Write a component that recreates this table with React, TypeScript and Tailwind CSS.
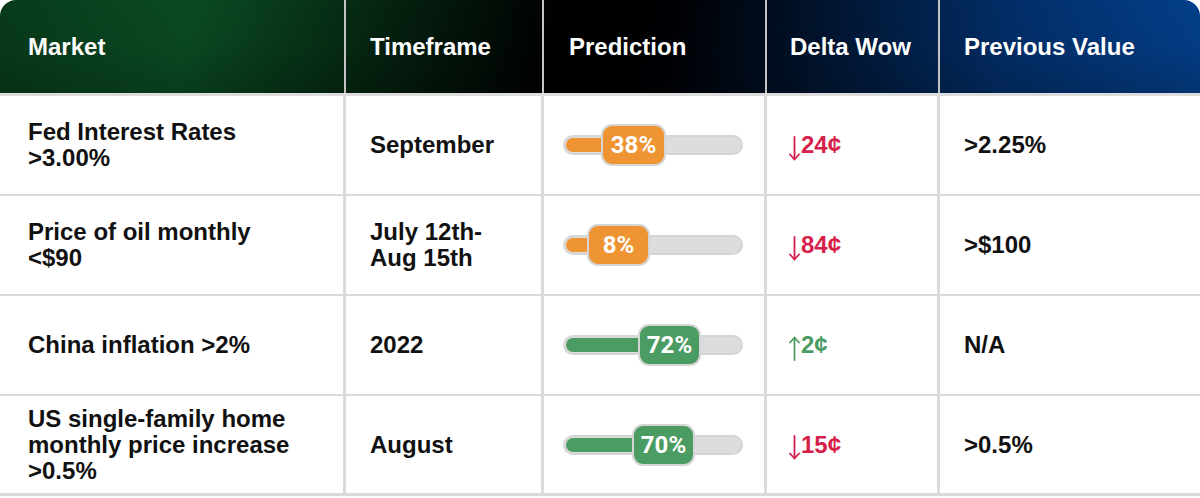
import React from 'react';

type Row = {
  market: string[];
  timeframe: string[];
  pct: number;
  badgeLeft: number;
  badgeWidth: number;
  color: 'orange' | 'green';
  delta: { dir: 'up' | 'down'; value: string };
  prev: string;
};

const rows: Row[] = [
  {
    market: ['Fed Interest Rates', '>3.00%'],
    timeframe: ['September'],
    pct: 38,
    badgeLeft: 38,
    badgeWidth: 65,
    color: 'orange',
    delta: { dir: 'down', value: '24¢' },
    prev: '>2.25%',
  },
  {
    market: ['Price of oil monthly', '<$90'],
    timeframe: ['July 12th-', 'Aug 15th'],
    pct: 8,
    badgeLeft: 24,
    badgeWidth: 63,
    color: 'orange',
    delta: { dir: 'down', value: '84¢' },
    prev: '>$100',
  },
  {
    market: ['China inflation >2%'],
    timeframe: ['2022'],
    pct: 72,
    badgeLeft: 75,
    badgeWidth: 63,
    color: 'green',
    delta: { dir: 'up', value: '2¢' },
    prev: 'N/A',
  },
  {
    market: ['US single-family home', 'monthly price increase', '>0.5%'],
    timeframe: ['August'],
    pct: 70,
    badgeLeft: 69,
    badgeWidth: 63,
    color: 'green',
    delta: { dir: 'down', value: '15¢' },
    prev: '>0.5%',
  },
];

const cols = 'grid grid-cols-[346px_198px_223px_173px_1fr]';

const PredictionBar = ({ row }: { row: Row }) => {
  const fill = row.color === 'orange' ? 'bg-[#ee9433]' : 'bg-[#4b9c63]';
  return (
    <div className="relative h-[42px] w-[180px]">
      {/* track */}
      <div className="absolute left-0 right-0 top-[11px] h-[20px] rounded-full border-2 border-[#d5d5d5] bg-[#dddddd] p-[1px]">
        <div
          className={`h-full rounded-full ${fill}`}
          style={{ width: row.badgeLeft + 10 }}
        />
      </div>
      {/* badge */}
      <div
        className={`absolute top-0 flex h-[42px] items-center justify-center rounded-[11px] border-2 border-[#d5d5d5] ${fill} font-['Roboto',sans-serif] text-[24px] font-bold text-white`}
        style={{ left: row.badgeLeft, width: row.badgeWidth }}
      >
        {row.pct}%
      </div>
    </div>
  );
};

const Arrow = ({ dir }: { dir: 'up' | 'down' }) => (
  <svg width="11" height="25" viewBox="0 0 11 25" className="mt-[6px] shrink-0" fill="none" stroke="currentColor" strokeWidth="1.8" strokeLinecap="round">
    {dir === 'down' ? (
      <>
        <path d="M5.5 1v22" />
        <path d="M1 18.5l4.5 5 4.5-5" />
      </>
    ) : (
      <>
        <path d="M5.5 2v22" />
        <path d="M1 6.5l4.5-5 4.5 5" />
      </>
    )}
  </svg>
);

export default function App() {
  return (
    <div className="h-[498px] w-[1200px] bg-white font-['Liberation_Sans',Arial,sans-serif]">
      {/* header */}
      <div className="h-[93px] rounded-t-[16px] bg-[linear-gradient(100deg,#073a1a_0%,#0a4b22_16%,#05200f_33%,#000000_46%,#000104_56%,#01142f_68%,#022f6a_84%,#03408c_100%)]">
        <div
          className={`${cols} h-full rounded-t-[16px] bg-[linear-gradient(180deg,rgba(0,0,0,0)_0%,rgba(0,0,0,0.05)_50%,rgba(0,0,0,0.2)_100%)] text-[24px] font-bold text-white`}
        >
          {['Market', 'Timeframe', 'Prediction', 'Delta Wow', 'Previous Value'].map((h, i) => (
            <div
              key={h}
              className={`flex items-center ${i === 0 ? 'pl-[28px]' : i === 2 ? 'pl-[25px]' : i === 3 ? 'pl-[23px]' : 'pl-[24px]'} ${i < 4 ? 'border-r-2 border-[#c4c4c4]' : ''}`}
            >
              {h}
            </div>
          ))}
        </div>
      </div>
      <div className="h-[3px] bg-[#dcdcdc]" />

      {/* body */}
      {rows.map((r, idx) => (
        <div key={idx} className={`${cols} h-[100px] text-[24px] font-bold leading-[26px] text-[#111]`}>
          <div className={`flex flex-col justify-center border-r-[3px] border-[#dadada] pl-[28px] ${idx < 3 ? 'border-b-2' : 'border-b-[3px]'}`}>
            {r.market.map((l) => (
              <span key={l}>{l}</span>
            ))}
          </div>
          <div className={`flex flex-col justify-center border-r-[3px] border-[#dadada] pl-[24px] ${idx < 3 ? 'border-b-2' : 'border-b-[3px]'}`}>
            {r.timeframe.map((l) => (
              <span key={l}>{l}</span>
            ))}
          </div>
          <div className={`flex items-center border-r-[3px] border-[#dadada] pl-[19px] ${idx < 3 ? 'border-b-2' : 'border-b-[3px]'}`}>
            <PredictionBar row={r} />
          </div>
          <div
            className={`flex items-center gap-[1px] border-r-[3px] border-[#dadada] pl-[22px] ${idx < 3 ? 'border-b-2' : 'border-b-[3px]'} ${r.delta.dir === 'down' ? 'text-[#d61f4b]' : 'text-[#4b9c63]'}`}
          >
            <Arrow dir={r.delta.dir} />
            <span>{r.delta.value}</span>
          </div>
          <div className={`flex items-center border-[#dadada] pl-[24px] ${idx < 3 ? 'border-b-2' : 'border-b-[3px]'}`}>
            {r.prev}
          </div>
        </div>
      ))}
    </div>
  );
}
